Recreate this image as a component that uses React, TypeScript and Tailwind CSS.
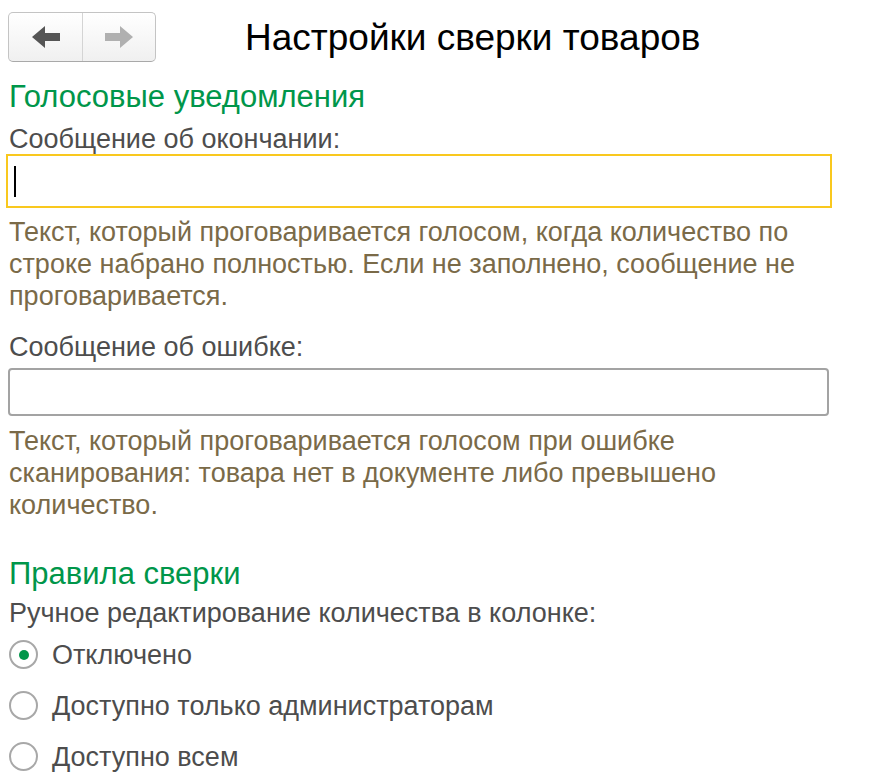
import React from "react"

const font = { fontFamily: '"Liberation Sans", Arial, sans-serif' }

function NavButtons() {
  return (
    <div className="-ml-[1px] flex h-[50px] w-[148px] rounded-[5px] border border-[#c4c4c4] border-b-[#a9a9a9] bg-gradient-to-b from-white to-[#f0f0f0]">
      <button type="button" className="flex w-[74px] items-center justify-center border-r border-[#d4d4d4]">
        <svg width="28" height="22" viewBox="0 0 28 22">
          <path d="M0 11 L13 0 V7 H28 V15 H13 V22 Z" fill="#555555" />
        </svg>
      </button>
      <button type="button" className="flex flex-1 items-center justify-center">
        <svg width="28" height="22" viewBox="0 0 28 22">
          <path d="M28 11 L15 0 V7 H0 V15 H15 V22 Z" fill="#b0b0b0" />
        </svg>
      </button>
    </div>
  )
}

function Radio({ label, checked }: { label: string; checked?: boolean }) {
  return (
    <div className="flex h-[51px] items-center">
      <span className="flex h-[29px] w-[29px] items-center justify-center rounded-full border-2 border-[#a8a8a8] bg-white">
        {checked && <span className="h-[10px] w-[10px] rounded-full bg-[#00964a]" />}
      </span>
      <span className="ml-[14px] text-[27px] leading-[32px] text-[#4d4d4d]">{label}</span>
    </div>
  )
}

export default function App() {
  return (
    <div className="min-h-screen w-[878px] bg-white pl-[9px] pr-[46px]" style={font}>
      <div className="flex items-center pt-[12px]">
        <NavButtons />
        <h1 className="ml-[89px] text-[37px] leading-none text-black">Настройки сверки товаров</h1>
      </div>

      <h2 className="mt-[17px] text-[31px] leading-[36px] text-[#00964a]">Голосовые уведомления</h2>
      <div className="mt-[10px] text-[27px] leading-[28px] text-[#4d4d4d]">Сообщение об окончании:</div>
      <div className="-ml-[3px] mt-[1px] flex h-[54px] items-center border-2 border-[#f9c81e] pl-[6px]">
        <span className="h-[31px] w-[2px] bg-black" />
      </div>
      <p className="mt-[8px] text-[27px] leading-[32px] text-[#7a6a48]">
        Текст, который проговаривается голосом, когда количество по строке набрано полностью. Если не заполнено,
        сообщение не проговаривается.
      </p>

      <div className="mt-[21px] text-[27px] leading-[28px] text-[#4d4d4d]">Сообщение об ошибке:</div>
      <div className="-ml-[1px] mr-[3px] mt-[7px] h-[48px] rounded-[4px] border-2 border-[#a3a3a3]" />
      <p className="mt-[9px] text-[27px] leading-[32px] text-[#7a6a48]">
        Текст, который проговаривается голосом при ошибке сканирования: товара нет в документе либо превышено
        количество.
      </p>

      <h2 className="mt-[35px] text-[31px] leading-[36px] text-[#00964a]">Правила сверки</h2>
      <div className="mt-[7px] text-[27px] leading-[28px] text-[#4d4d4d]">
        Ручное редактирование количества в колонке:
      </div>
      <div className="mt-[2px]">
        <Radio label="Отключено" checked />
        <Radio label="Доступно только администраторам" />
        <Radio label="Доступно всем" />
      </div>
    </div>
  )
}
